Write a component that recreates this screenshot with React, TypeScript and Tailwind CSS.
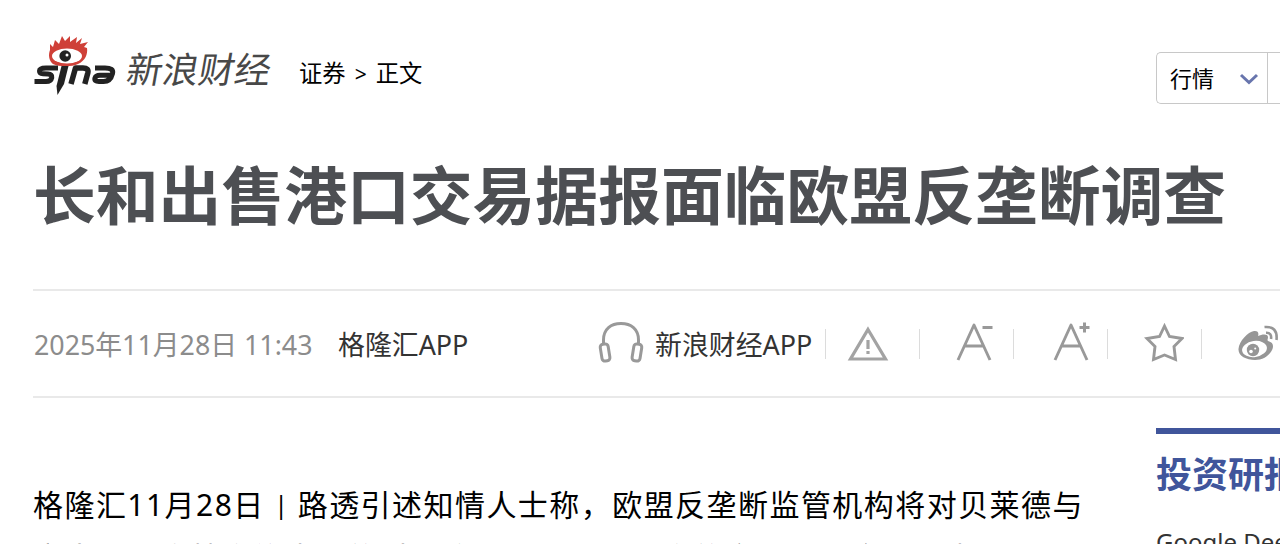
import React from "react";

const Divider = () => <span className="h-[30px] w-px shrink-0 bg-[#dcdcdc]" />;

const Sina = () => (
  <svg className="h-[70px] w-[95px] shrink-0" viewBox="0 0 95 70">
    <path
      d="M25 34 C21 31 20 25 22 20 L22 14 L25 17 L27 10 L31 14 L34 6 L37 11 L42 6 L42 12 L49 7 L48 13 L54 8 L52 14 L60 12 L56 17 L59 18 C60 24 57 31 50 34 C44 37 31 37 25 34 Z"
      fill="#cf4038"
    />
    <ellipse cx="39" cy="26" rx="15" ry="7.6" fill="#fff" />
    <circle cx="37.2" cy="26" r="5.800" fill="#222" />
    <circle cx="39" cy="25" r="1.500" fill="#fff" />
    <g fill="none" stroke="#222" strokeWidth="5" strokeLinejoin="round">
      <path d="M30 38 H18 Q11.500 38 11.500 41 Q11.500 43.500 15 43.700 L20 44.100 Q24.500 44.500 23.800 47.500 Q23 51.500 18 51.500 H6.500" />
      <path d="M43 54 L47.500 38 H55 Q61 38 59.800 43 L56.800 54" strokeWidth="5.500" />
      <path d="M67 38 H77 Q86 38 84.500 43.500 Q82.500 51.500 75.500 51.500 H71 Q66 51.500 67 48 Q67.800 45.300 72 45.300 H83" />
    </g>
    <path d="M33.500 36 H40.500 L36 54 L29.500 65 L28.500 56 Z" fill="#222" />
  </svg>
);

const Headphones = () => (
  <svg className="mb-[4px] h-[44px] w-[46px] shrink-0" viewBox="0 0 46 44" fill="none" stroke="#999" strokeWidth="3">
    <path d="M5.500 24 V20 C5.500 9 13 3.500 23 3.500 S40.500 9 40.500 20 V24" />
    <rect x="3" y="24" width="8" height="17" rx="3" transform="rotate(-9 7 32)" />
    <rect x="35" y="24" width="8" height="17" rx="3" transform="rotate(9 39 32)" />
  </svg>
);

const Warning = () => (
  <svg className="h-[36px] w-[42px] shrink-0" viewBox="0 0 42 36" fill="none" stroke="#a3a3a3" strokeWidth="3.200">
    <path d="M21 3.500 L38.500 33 H3.500 Z" />
    <path d="M21 14 V23 M21 25 V28" />
  </svg>
);

const Letter = ({ plus }: { plus?: boolean }) => (
  <svg className="mb-[3px] h-[40px] w-[38px] shrink-0" viewBox="0 0 38 40" fill="none" stroke="#999">
    <path d="M2 38 L18 3 L34 38 M8 24 H28" strokeWidth="2.900" strokeLinejoin="round" />
    <path d={plus ? "M26.500 5.500 H36.500 M31.500 0.500 V10.500" : "M26.500 5.500 H36.500"} strokeWidth="3" />
  </svg>
);

const Star = () => (
  <svg className="mb-[4px] h-[40px] w-[40px] shrink-0" viewBox="0 0 40 40" fill="none" stroke="#999" strokeWidth="2.900">
    <path d="M20.500 4 L25.500 14.500 L38 16.500 L30 24.500 L31.500 37.500 L20.500 33 L9.500 37.500 L11 24.500 L3 16.500 L15.500 14.500 Z" />
  </svg>
);

const Weibo = () => (
  <svg className="mb-[4px] h-[40px] w-[42px] shrink-0" viewBox="0 0 42 40">
    <path
      d="M0.500 27 C1 19 10 10 16 9 C20 8.500 21 11 20 14 C24 12 30 11.500 30 15 C30 17 29 18 30 19 C34 20 36 22.500 34.500 27 C31 35 24 38 17 38 C8 38 0 34 0.500 27 Z"
      fill="#969696"
    />
    <ellipse cx="16.500" cy="27" rx="12.500" ry="8" fill="#fff" transform="rotate(-8 16.500 27)" />
    <circle cx="15" cy="28" r="6.200" fill="#969696" />
    <circle cx="13" cy="29.500" r="1.800" fill="#fff" />
    <circle cx="17.200" cy="26.500" r="1" fill="#fff" />
    <path d="M26.500 5 Q40 4 38.500 18 M28 10.800 Q34 10.500 33 17" stroke="#969696" strokeWidth="2.600" fill="none" />
  </svg>
);

export default function App() {
  return (
    <div className="h-[544px] w-[1280px] overflow-hidden bg-white font-['Noto_Sans','Noto_Sans_CJK_SC',sans-serif] whitespace-nowrap text-black">
      <header className="flex h-[116px] pt-[30px] pl-[28px]">
        <Sina />
        <div className="mt-[16px] ml-[2px] w-[146px] -skew-x-[10deg] text-[36px] leading-[48px] font-normal text-[#484848]">新浪财经</div>
        <nav className="mt-[27px] ml-[28px] text-[23.3px] leading-[32px]">
          证券 <span className="mx-[3px] text-[21px]">&gt;</span> 正文
        </nav>
        <div className="mt-[22px] ml-auto flex h-[52px] w-[124px] shrink-0 rounded-l-[5px] border border-r-0 border-[#c8c8c8]">
          <div className="flex w-[111px] items-center justify-between border-r border-[#c8c8c8] pr-[8px] pl-[13px]">
            <span className="text-[22px]">行情</span>
            <svg className="mt-[2px] h-[12px] w-[20px]" viewBox="0 0 20 12" fill="none" stroke="#6875ad" strokeWidth="3">
              <path d="M2 2 L10 9.500 L18 2" />
            </svg>
          </div>
        </div>
      </header>
      <h1 className="mt-[34px] ml-[33px] h-[90px] text-[62.8px] leading-[90px] font-bold text-[#4d4f53]">长和出售港口交易据报面临欧盟反垄断调查</h1>
      <section className="mt-[49px] ml-[33px] flex h-[109px] items-center border-y-2 border-[#e9e9e9]">
        <time className="w-[305px] shrink-0 pt-[3px] pl-px text-[26.8px] text-[#8c8c8c]">2025年11月28日 11:43</time>
        <span className="w-[260px] shrink-0 pt-[3px] text-[26.9px] text-[#333]">格隆汇APP</span>
        <Headphones />
        <span className="ml-[11px] w-[170px] shrink-0 pt-[3px] text-[26.9px] text-[#333]">新浪财经APP</span>
        <Divider />
        <div className="flex w-[93px] shrink-0 pl-[21px]"><Warning /></div>
        <Divider />
        <div className="flex w-[93px] shrink-0 pl-[36px]"><Letter /></div>
        <Divider />
        <div className="flex w-[93px] shrink-0 pl-[39px]"><Letter plus /></div>
        <Divider />
        <div className="flex w-[93px] shrink-0 pl-[36px]"><Star /></div>
        <Divider />
        <div className="flex shrink-0 pl-[36px]"><Weibo /></div>
      </section>
      <main className="flex">
        <article className="w-[1156px] shrink-0 pt-[80px] pl-[33px] text-[30px] leading-[53px] tracking-[1.45px]">
          <p>
            格隆汇11月28日
            <span className="inline-block w-[33px] text-center align-[2px] text-[25px] leading-none tracking-normal">|</span>
            路透引述知情人士称，欧盟反垄断监管机构将对贝莱德与
            <br />
            意大利阿庞特家族牵头的财团收购长和港口资产的交易展开全面调查
          </p>
        </article>
        <aside className="mt-[30px] w-[124px] shrink-0 border-t-[6px] border-[#40559b]">
          <h2 className="mt-[16px] text-[36px] leading-[50px] font-bold text-[#40559b]">投资研报</h2>
          <p className="mt-[24px] text-[24px] leading-[36px] text-[#333]">Google DeepMind</p>
        </aside>
      </main>
    </div>
  );
}
